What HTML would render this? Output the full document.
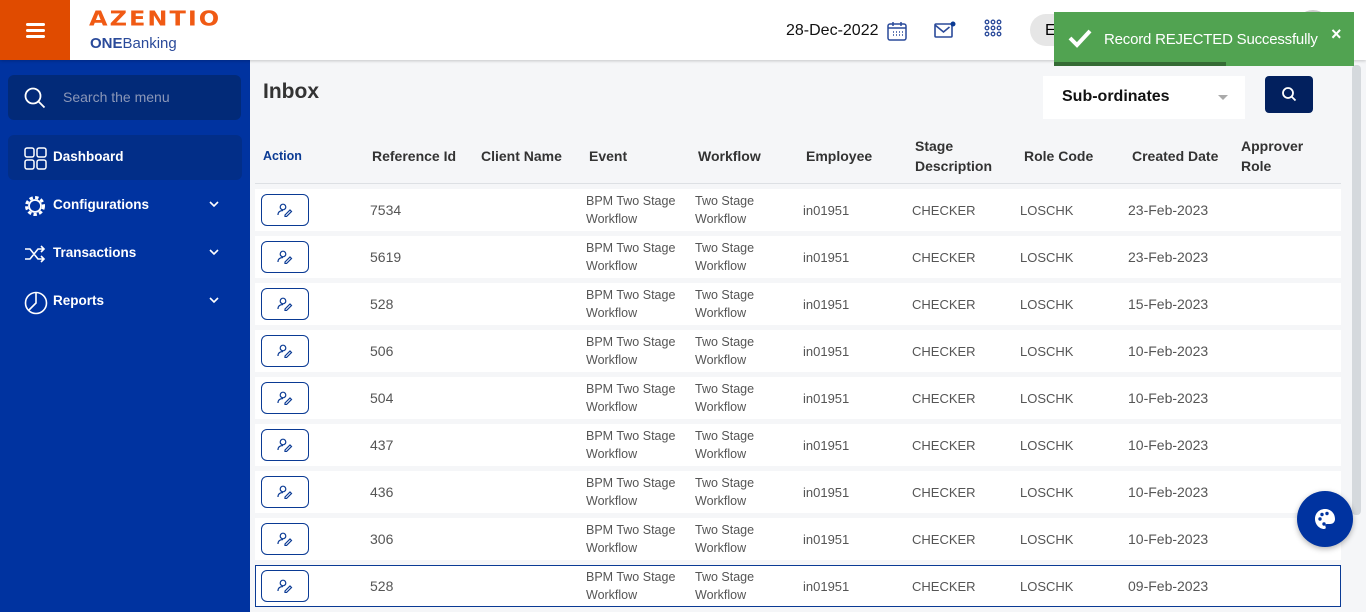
<!DOCTYPE html>
<html><head><style>
*{box-sizing:border-box;margin:0;padding:0}
body{width:1366px;height:612px;overflow:hidden;font-family:"Liberation Sans",sans-serif;background:#f5f6f8;position:relative}
.hdr{position:absolute;left:0;top:0;width:1366px;height:60px;background:#fff;box-shadow:0 1px 3px rgba(0,0,0,.2);z-index:2}
.ham{position:absolute;left:0;top:0;width:70px;height:60px;background:#e04b00}
.ham i{position:absolute;left:26px;width:19px;height:3px;background:#fff;border-radius:2px}
.side{position:absolute;left:0;top:60px;width:250px;height:552px;background:#0033a0}
.srch{position:absolute;left:8px;top:15px;width:233px;height:45px;background:#022a78;border-radius:6px;color:#8b97b8;font-size:14px}
.item{position:absolute;left:8px;width:234px;height:45px;color:#fff;font-size:13.5px;font-weight:bold}
.item span{position:absolute;left:45px;top:14px}
.item svg{position:absolute;left:16px;top:12px}
.item .chev{left:200px;top:15px}
.c{position:absolute;font-size:13px;color:#555}
.th{position:absolute;font-size:14px;font-weight:bold;color:#333;line-height:20px}
.row{position:absolute;left:255px;width:1086px;height:42px;background:#fff}
.btn{position:absolute;left:6px;top:5px;width:48px;height:32px;border:1.3px solid #0a3a94;border-radius:6px;background:#fff}
.t2{font-size:12.5px;color:#555;line-height:18px}
</style></head><body>
<div class="hdr">
 <div class="ham"><i style="top:23px"></i><i style="top:29px"></i><i style="top:35px"></i></div>
 <div style="position:absolute;left:89px;top:7px;color:#f05a14;font-weight:900;font-size:24px;letter-spacing:2px;font-family:'DejaVu Sans',sans-serif;transform:scaleY(.85);transform-origin:left top">AZENTIO</div>
 <div style="position:absolute;left:90px;top:35px;font-size:15px;color:#2a4a9a"><b>ONE</b>Banking</div>
 <div style="position:absolute;left:786px;top:22px;font-size:16px;color:#111">28-Dec-2022</div>
 <svg style="position:absolute;left:887px;top:21px" width="20" height="20" viewBox="0 0 20 20" fill="none" stroke="#2a4a9a" stroke-width="1.5"><rect x="1" y="3" width="18" height="16" rx="2"/><path d="M1 7h18M6 1v4M14 1v4"/><path d="M6 11h1M9 11h1M12 11h1M15 11h1M6 14h1M9 14h1M12 14h1M15 14h1" stroke-width="1.5"/></svg>
 <svg style="position:absolute;left:934px;top:21px" width="22" height="18" viewBox="0 0 22 18" fill="none" stroke="#2a4a9a" stroke-width="1.6"><rect x="1" y="3" width="17" height="13" rx="1"/><path d="M1 4l8.5 7 6-5"/><circle cx="19" cy="3" r="2.5" fill="#0a3a94" stroke="none"/></svg>
 <svg style="position:absolute;left:984px;top:19px" width="18" height="18" viewBox="0 0 18 18" fill="none" stroke="#2a4a9a" stroke-width="1.3"><circle cx="3" cy="3" r="1.8"/><circle cx="9" cy="3" r="1.8"/><circle cx="15" cy="3" r="1.8"/><circle cx="3" cy="9" r="1.8"/><circle cx="9" cy="9" r="1.8"/><circle cx="15" cy="9" r="1.8"/><circle cx="3" cy="15" r="1.8"/><circle cx="9" cy="15" r="1.8"/><circle cx="15" cy="15" r="1.8"/></svg>
 <div style="position:absolute;left:1030px;top:14px;width:60px;height:32px;border-radius:16px;background:#e6e6e6;font-size:16px;padding:8px 15px">E</div>
 <div style="position:absolute;left:1295px;top:10px;width:36px;height:36px;border-radius:50%;background:#ccc"></div>
</div>
<div style="position:absolute;left:1054px;top:12px;width:300px;height:54px;background:#51a351;z-index:5;color:#fff;font-size:15px">
 <svg style="position:absolute;left:14px;top:16px" width="24" height="20" viewBox="0 0 24 20"><path d="M2 10l7 7L22 3" fill="none" stroke="#fff" stroke-width="4"/></svg>
 <span style="position:absolute;left:50px;top:19px;letter-spacing:-0.2px">Record REJECTED Successfully</span>
 <span style="position:absolute;left:277px;top:12px;font-weight:bold;font-size:18px">×</span>
 <div style="position:absolute;left:0;bottom:0;width:172px;height:4px;background:#356b35"></div>
</div>
<div class="side">
 <div class="srch"><svg style="position:absolute;left:16px;top:12px" width="22" height="22" viewBox="0 0 22 22" fill="none" stroke="#fff" stroke-width="1.8"><circle cx="9" cy="9" r="7.5"/><path d="M14.5 14.5l6 6"/></svg><span style="position:absolute;left:55px;top:14px">Search the menu</span></div>
 <div class="item" style="top:75px;background:#022e88;border-radius:6px"><svg width="24" height="24" viewBox="0 0 24 24" fill="none" stroke="#fff" stroke-width="1.5"><rect x="1" y="1" width="9" height="9" rx="2"/><rect x="13" y="1" width="9" height="9" rx="2"/><rect x="1" y="13" width="9" height="9" rx="2"/><rect x="13" y="13" width="9" height="9" rx="2"/></svg><span>Dashboard</span></div>
 <div class="item" style="top:123px"><svg width="22" height="22" viewBox="0 0 22 22" fill="none" stroke="#fff"><circle cx="11" cy="11" r="8.5" stroke-width="3" stroke-dasharray="3.4 2.3"/><circle cx="11" cy="11" r="6" stroke-width="1.8"/><path d="M11 5v12M5 11l12 0" stroke-width="0"/></svg><span>Configurations</span><svg class="chev" width="12" height="12" viewBox="0 0 12 12"><path d="M2 4l4 4 4-4" fill="none" stroke="#fff" stroke-width="1.6"/></svg></div>
 <div class="item" style="top:171px"><svg width="22" height="22" viewBox="0 0 22 22" fill="none" stroke="#fff" stroke-width="1.6"><path d="M1 6h5l8 10h6M1 16h5l8-10h6M17 3l3 3-3 3M17 13l3 3-3 3"/></svg><span>Transactions</span><svg class="chev" width="12" height="12" viewBox="0 0 12 12"><path d="M2 4l4 4 4-4" fill="none" stroke="#fff" stroke-width="1.6"/></svg></div>
 <div class="item" style="top:219px"><svg width="24" height="24" viewBox="0 0 24 24" fill="none" stroke="#fff" stroke-width="1.6"><circle cx="12" cy="12" r="10.5"/><path d="M12 1.5V12l-7 7"/></svg><span>Reports</span><svg class="chev" width="12" height="12" viewBox="0 0 12 12"><path d="M2 4l4 4 4-4" fill="none" stroke="#fff" stroke-width="1.6"/></svg></div>
</div>
<div style="position:absolute;left:1352px;top:65px;width:9px;height:450px;background:#d5d9dd;border-radius:4px"></div>
<div style="position:absolute;left:263px;top:80px;font-size:21px;font-weight:bold;color:#333">Inbox</div>
<div style="position:absolute;left:1043px;top:76px;width:202px;height:43px;background:#fff;font-size:16px;font-weight:bold;color:#111;padding:12px 19px">Sub-ordinates<span style="position:absolute;left:175px;top:19px;border:5px solid transparent;border-top-color:#aaa"></span></div>
<div style="position:absolute;left:1265px;top:76px;width:48px;height:37px;background:#02205e;border-radius:4px"><svg style="position:absolute;left:16px;top:10px" width="16" height="16" viewBox="0 0 16 16" fill="none" stroke="#fff" stroke-width="1.8"><circle cx="7" cy="7" r="5"/><path d="M11 11l3.5 3.5"/></svg></div>
<div style="position:absolute;left:255px;top:183px;width:1086px;height:1px;background:#dde0e4"></div>
<div class="th" style="left:263px;top:146px;color:#0a3a94;font-size:12.5px">Action</div>
<div class="th" style="left:372px;top:146px">Reference Id</div>
<div class="th" style="left:481px;top:146px">Client Name</div>
<div class="th" style="left:589px;top:146px">Event</div>
<div class="th" style="left:698px;top:146px">Workflow</div>
<div class="th" style="left:806px;top:146px">Employee</div>
<div class="th" style="left:915px;top:136px">Stage<br>Description</div>
<div class="th" style="left:1024px;top:146px">Role Code</div>
<div class="th" style="left:1132px;top:146px">Created Date</div>
<div class="th" style="left:1241px;top:136px">Approver<br>Role</div>
<div id="rows"></div>
<script>
var d=[["7534","23-Feb-2023"],["5619","23-Feb-2023"],["528","15-Feb-2023"],["506","10-Feb-2023"],["504","10-Feb-2023"],["437","10-Feb-2023"],["436","10-Feb-2023"],["306","10-Feb-2023"],["528","09-Feb-2023"]];
var h="";d.forEach(function(r,i){var t=189+i*47;
h+='<div class="row" style="top:'+t+'px;'+(i==8?'box-shadow:inset 0 0 0 1px #0a3a94;':'')+'"><div class="btn"><svg style="position:absolute;left:15px;top:8px" width="16" height="14" viewBox="0 0 16 14" fill="none" stroke="#0a3a94" stroke-width="1.2"><circle cx="6" cy="4" r="2.8"/><path d="M1 12c0-3 2-4.5 5-4.5M8 12l5-5 1.5 1.5-5 5H8z"/></svg></div>'+
'<div class="c" style="left:115px;top:13px;font-size:14px">'+r[0]+'</div>'+
'<div class="c t2" style="left:331px;top:3px">BPM Two Stage<br>Workflow</div>'+
'<div class="c t2" style="left:440px;top:3px">Two Stage<br>Workflow</div>'+
'<div class="c" style="left:548px;top:14px">in01951</div>'+
'<div class="c" style="left:657px;top:14px">CHECKER</div>'+
'<div class="c" style="left:765px;top:14px">LOSCHK</div>'+
'<div class="c" style="left:873px;top:13px;font-size:14px">'+r[1]+'</div></div>';});
document.getElementById("rows").innerHTML=h;
</script>
<div style="position:absolute;left:1297px;top:491px;width:56px;height:56px;border-radius:50%;background:#0033a0;box-shadow:0 2px 6px rgba(0,0,0,.3)"><svg style="position:absolute;left:17px;top:17px" width="22" height="22" viewBox="0 0 22 22"><path d="M11 1C5 1 1 5.5 1 11s4.5 10 9 10c2 0 2-1.5 1.5-2.5S11 16 13 16h3c3 0 5-2 5-5C21 5 16.5 1 11 1z" fill="#fff"/><circle cx="6" cy="11" r="1.7" fill="#0033a0"/><circle cx="8" cy="6.5" r="1.7" fill="#0033a0"/><circle cx="13" cy="5.5" r="1.7" fill="#0033a0"/><circle cx="10" cy="16" r="1.7" fill="#0033a0"/></svg></div>
</body></html>
